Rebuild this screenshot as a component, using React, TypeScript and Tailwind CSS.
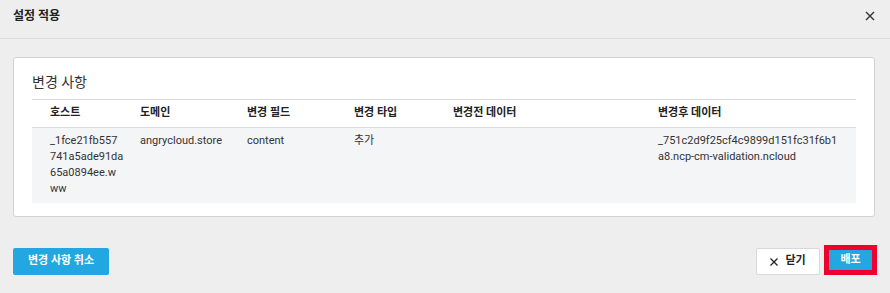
import React from "react";

const font = { fontFamily: 'Roboto, "Noto Sans CJK KR", sans-serif' };

export default function App() {
  const cols = "grid grid-cols-[90px_107px_107px_99px_205px_1fr]";
  const hostLines = ["_1fce21fb557", "741a5ade91da", "65a0894ee.w", "ww"];
  return (
    <div className="w-[890px] h-[293px] bg-[#eeeeee] text-[#333333] flex flex-col" style={font}>
      <div className="h-[39px] border-b border-[#dddddd] pl-[13px] pr-[15px] pb-[6px] flex items-center justify-between">
        <span className="text-[12px] font-bold text-[#222222]">설정 적용</span>
        <svg width="10" height="10" viewBox="0 0 10 10" className="text-[#333333]">
          <path d="M1 1 L9 9 M9 1 L1 9" stroke="currentColor" strokeWidth="1.4" fill="none" />
        </svg>
      </div>
      <div className="px-[13px] pt-[18px]">
        <div className="w-[862px] bg-white border border-[#d2d2d2] rounded-[3px] px-[18px] pt-[14px] pb-[13px]">
          <div className="text-[14px] leading-[20px] text-[#333333]">변경 사항</div>
          <div className="mt-[7px] border-t border-[#d9d9d9]">
            <div className={`${cols} h-[28px] items-center border-b border-[#dddddd] text-[11px] font-bold text-[#222222]`}>
              <div className="pl-[18px]">호스트</div>
              <div className="pl-[18px]">도메인</div>
              <div className="pl-[18px]">변경 필드</div>
              <div className="pl-[18px]">변경 타입</div>
              <div className="pl-[18px]">변경전 데이터</div>
              <div className="pl-[18px]">변경후 데이터</div>
            </div>
            <div className={`${cols} bg-[#f4f5f7] pt-[5px] pb-[6px] text-[11px] leading-[16px] text-[#333333]`}>
              <div className="pl-[18px]">
                {hostLines.map((l) => (
                  <div key={l} className="whitespace-nowrap">{l}</div>
                ))}
              </div>
              <div className="pl-[18px]">angrycloud.store</div>
              <div className="pl-[18px]">content</div>
              <div className="pl-[18px]">추가</div>
              <div className="pl-[18px]"></div>
              <div className="pl-[18px] pr-[14px] break-all">_751c2d9f25cf4c9899d151fc31f6b1a8.ncp-cm-validation.ncloud</div>
            </div>
          </div>
        </div>
      </div>
      <div className="mt-[28px] px-[13px] flex items-end justify-between">
        <button className="h-[27px] w-[96px] bg-[#22a7e1] rounded-[2px] text-white text-[11px] font-bold flex items-center justify-center">
          변경 사항 취소
        </button>
        <div className="flex items-end gap-[4px]">
          <button className="h-[27px] w-[64px] bg-white border border-[#d8d8d8] rounded-[2px] text-[11px] font-bold text-[#222222] flex items-center justify-center gap-[7px]">
            <svg width="8" height="8" viewBox="0 0 8 8">
              <path d="M0.5 0.5 L7.5 7.5 M7.5 0.5 L0.5 7.5" stroke="#222222" strokeWidth="1.3" fill="none" />
            </svg>
            <span>닫기</span>
          </button>
          <div className="h-[30px] w-[53px] border-[5px] border-[#f0002c]">
            <div className="w-full h-full bg-[#22a7e1] text-white text-[11px] font-bold flex items-center justify-center">
              배포
            </div>
          </div>
        </div>
      </div>
    </div>
  );
}
